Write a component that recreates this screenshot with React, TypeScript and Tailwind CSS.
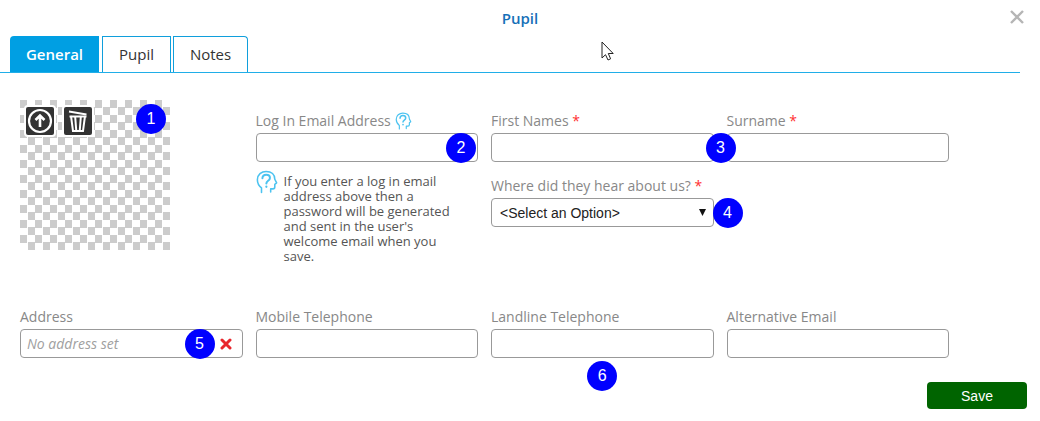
import type { ReactNode } from 'react';

const boxClass =
  'block h-[29px] w-full rounded border border-[#999] bg-white px-1.5 text-sm text-[#333] placeholder:italic placeholder:text-[#a0a0a0]';

function Badge({ n, className }: { n: number; className: string }) {
  return (
    <span
      className={`absolute flex size-[30px] items-center justify-center rounded-full bg-[#0000ff] font-['Liberation_Sans',sans-serif] text-base leading-none text-white ${className}`}
    >
      {n}
    </span>
  );
}

function HelpHead({ className }: { className: string }) {
  return (
    <svg
      viewBox="0 0 24 26"
      className={className}
      fill="none"
      stroke="#4cc3f0"
      strokeWidth="1.7"
      strokeLinecap="round"
      strokeLinejoin="round"
      aria-hidden="true"
    >
      <path d="M6 24.5V19.5C3.5 17.5 1.5 14.5 1.5 10.5C1.5 5 6 1.5 11 1.5C17 1.5 20.5 5 20.5 10L22.5 14L20.5 15.5V18.5Q20.5 20.5 18.5 20.5H16V24" />
      <path d="M7 9C7 6.5 8.8 5 11.2 5C13.6 5 15.2 6.5 15.2 8.5C15.2 11.8 11.3 11.5 11.3 14.5" strokeWidth="2.2" />
      <path d="M11.3 18V18.3" strokeWidth="2.4" />
    </svg>
  );
}

function Field({
  id,
  label,
  required,
  icon,
  children,
}: {
  id: string;
  label: string;
  required?: boolean;
  icon?: ReactNode;
  children: ReactNode;
}) {
  return (
    <div>
      <div className="flex h-6 items-center gap-1">
        <label htmlFor={id} className="whitespace-nowrap text-sm text-[#888]">
          {label}
          {required && <span className="text-[#ff3030]"> *</span>}
        </label>
        {icon}
      </div>
      <div className="relative">{children}</div>
    </div>
  );
}

export default function App() {
  return (
    <main className="relative bg-white pb-3 font-['Open_Sans','Noto_Sans',sans-serif]">
      <header className="relative flex h-9 items-center justify-center">
        <h1 className="text-[15px] font-semibold text-[#1670b8]">Pupil</h1>
        <button type="button" aria-label="Close" className="absolute top-2.5 right-4">
          <svg viewBox="0 0 14 14" className="size-3.5" stroke="#b5b5b5" strokeWidth="2.4" aria-hidden="true">
            <path d="M1 1L13 13M13 1L1 13" />
          </svg>
        </button>
      </header>

      <nav role="tablist" className="mr-5 flex h-[37px] gap-0.5 border-b border-[#20aee8] pl-2.5 text-[15px] text-[#333]">
        <button type="button" role="tab" aria-selected="true" className="mr-px w-[89px] rounded-tl bg-[#009fe3] font-semibold text-white">
          General
        </button>
        <button type="button" role="tab" aria-selected="false" className="w-[69px] border border-b-0 border-[#109fdc]">
          Pupil
        </button>
        <button type="button" role="tab" aria-selected="false" className="w-[75px] rounded-tr border border-b-0 border-[#109fdc]">
          Notes
        </button>
      </nav>

      <form id="pupil-form" className="pr-[91px] pl-5">
        <div className="grid grid-cols-4 gap-x-[13px] pt-[27px]">
          <div className="relative flex size-[150px] items-start gap-2 bg-[conic-gradient(#fff_25%,#ccc_0_50%,#fff_0_75%,#ccc_0)] bg-[length:15px_15px] p-1 pt-[5px]">
            <button type="button" aria-label="Upload picture" className="size-8 rounded border-2 border-white bg-[#333]">
              <svg viewBox="0 0 28 28" className="size-7" fill="none" stroke="#fff" aria-hidden="true">
                <circle cx="14" cy="14" r="11" strokeWidth="2.2" />
                <path d="M14 20V9M9.5 13L14 8.5L18.5 13" strokeWidth="2.6" />
              </svg>
            </button>
            <button type="button" aria-label="Delete picture" className="-ml-0.5 size-8 rounded border-2 border-white bg-[#333]">
              <svg viewBox="0 0 28 28" className="size-7" fill="none" stroke="#fff" aria-hidden="true">
                <path d="M5 4.5L22.5 7.5" strokeWidth="1.8" />
                <path d="M5.5 9.5H22.5" strokeWidth="2" />
                <path d="M7 9L9 24H19L21 9M11.2 10L12.2 23M16.8 10L15.8 23" strokeWidth="2" />
              </svg>
            </button>
            <Badge n={1} className="top-1 right-1" />
          </div>

          <div className="pt-[9px]">
            <Field id="login-email" label="Log In Email Address" icon={<HelpHead className="h-[18px] w-[17px]" />}>
              <input id="login-email" type="email" className={boxClass} />
              <Badge n={2} className="top-0 right-0.5" />
            </Field>
            <div className="flex gap-1.5 pt-2">
              <HelpHead className="h-6 w-[22px] shrink-0" />
              <p className="w-[170px] pt-1 text-[13px] leading-[15px] text-[#555]">
                If you enter a log in email address above then a password will be generated and sent in the user's
                welcome email when you save.
              </p>
            </div>
          </div>

          <div className="flex flex-col gap-3 pt-[9px]">
            <Field id="first-names" label="First Names" required>
              <input id="first-names" type="text" className={boxClass} />
              <Badge n={3} className="top-0 -right-[22px] z-10" />
            </Field>
            <Field id="hear-about" label="Where did they hear about us?" required>
              <select
                id="hear-about"
                className="block h-[29px] w-full appearance-none rounded border border-[#999] bg-white px-2 font-['Liberation_Sans',sans-serif] text-sm text-[#222]"
              >
                <option>&lt;Select an Option&gt;</option>
              </select>
              <svg viewBox="0 0 7 7" className="pointer-events-none absolute top-[11px] right-2 size-[7px]" aria-hidden="true">
                <path d="M0 0H7L3.5 7Z" fill="#111" />
              </svg>
              <Badge n={4} className="top-0 -right-[29px]" />
            </Field>
          </div>

          <div className="pt-[9px]">
            <Field id="surname" label="Surname" required>
              <input id="surname" type="text" className={boxClass} />
            </Field>
          </div>
        </div>

        <div className="grid grid-cols-4 gap-x-[13px] pt-[41px]">
          <Field id="address" label="Address">
            <input id="address" type="text" placeholder="No address set" className={boxClass} />
            <button type="button" aria-label="Clear address" className="absolute top-[9px] right-[11px]">
              <svg viewBox="0 0 12 12" className="size-3" stroke="#e8262c" strokeWidth="3" strokeLinecap="round" aria-hidden="true">
                <path d="M2 2L10 10M10 2L2 10" />
              </svg>
            </button>
            <Badge n={5} className="top-0 right-7" />
          </Field>
          <Field id="mobile" label="Mobile Telephone">
            <input id="mobile" type="tel" className={boxClass} />
          </Field>
          <Field id="landline" label="Landline Telephone">
            <input id="landline" type="tel" className={boxClass} />
            <Badge n={6} className="top-8 left-1/2 -translate-x-1/2" />
          </Field>
          <Field id="alt-email" label="Alternative Email">
            <input id="alt-email" type="email" className={boxClass} />
          </Field>
        </div>
      </form>

      <footer className="flex justify-end pt-6 pr-[13px]">
        <button
          type="submit"
          form="pupil-form"
          className="h-[27px] w-[100px] rounded bg-[#006400] font-['Liberation_Sans',sans-serif] text-sm text-white"
        >
          Save
        </button>
      </footer>

      <svg viewBox="0 0 13 20" className="pointer-events-none absolute top-[41px] left-[601px] h-5 w-[13px]" aria-hidden="true">
        <path d="M1 1V17L4.5 13.7L7 19L9.6 17.8L7.3 12.5H12.2Z" fill="#fff" stroke="#222" />
      </svg>
    </main>
  );
}
